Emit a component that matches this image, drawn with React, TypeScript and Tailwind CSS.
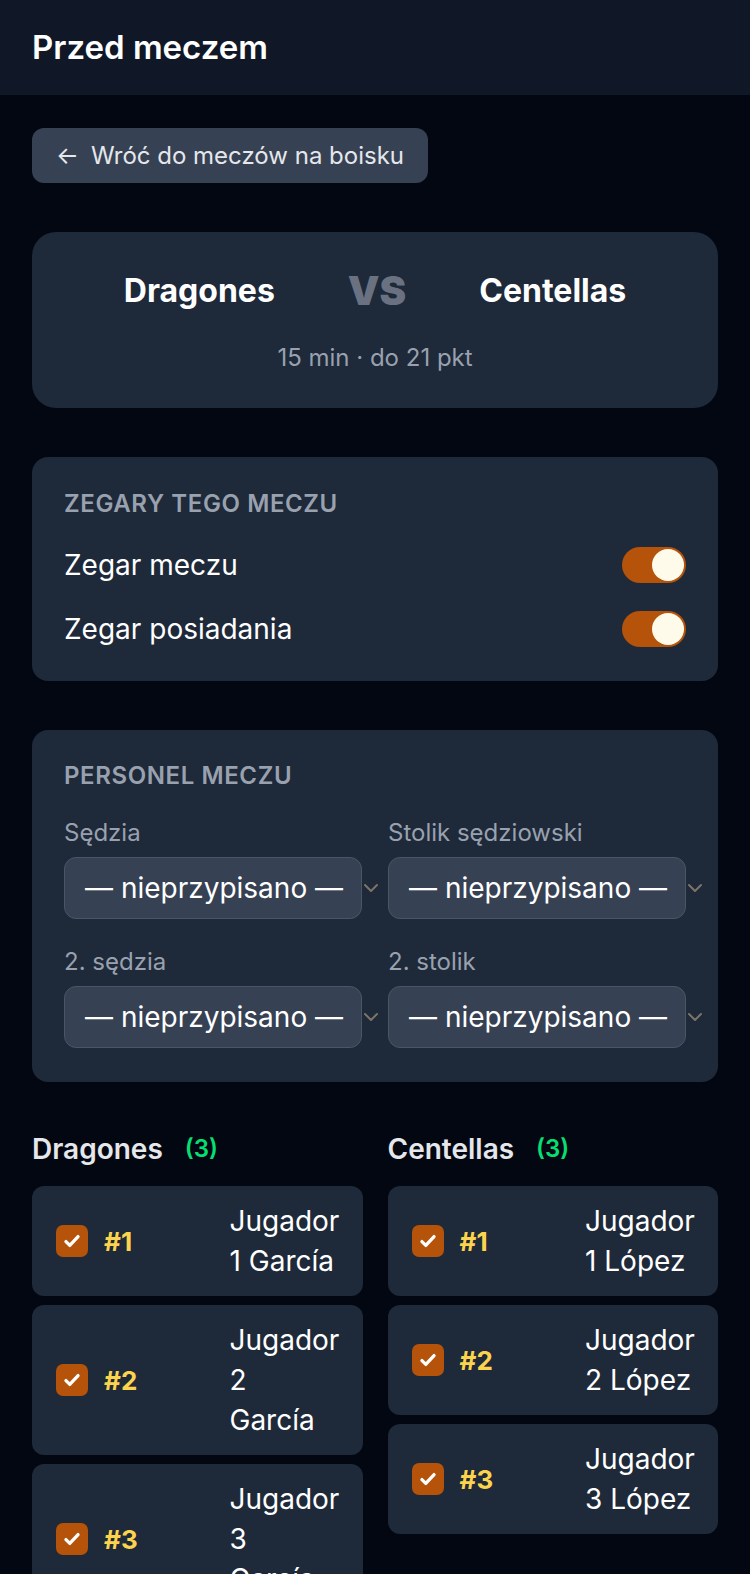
import { ChevronDown } from "lucide-react";

const font = { fontFamily: "Inter, 'Noto Sans', sans-serif" };

function Toggle() {
  return (
    <div className="flex h-[36px] w-[64px] items-center justify-end rounded-full bg-[#b45309] p-[2px]">
      <div className="h-[32px] w-[32px] rounded-full bg-[#fffbeb]" />
    </div>
  );
}

function Check() {
  return (
    <div className="flex h-[32px] w-[32px] shrink-0 items-center justify-center rounded-[7px] bg-[#b45309]">
      <svg viewBox="0 0 20 20" className="h-[22px] w-[22px]" fill="none" stroke="#fff" strokeWidth="3" strokeLinecap="round" strokeLinejoin="round">
        <path d="M4.5 10.5l3.5 3.5L15.5 6" />
      </svg>
    </div>
  );
}

function Picker({ label }: { label: string }) {
  return (
    <div>
      <div className="mb-[8px] text-[24px] leading-[32px] text-gray-400">{label}</div>
      <div className="relative">
        <div className="flex h-[62px] items-center whitespace-nowrap rounded-xl border border-gray-600 bg-gray-700 px-[20px] text-[28px] text-white">
          — nieprzypisano —
        </div>
        <ChevronDown className="absolute right-[-21px] top-[19px] h-[24px] w-[24px] text-[#7c7468]" strokeWidth={2} />
      </div>
    </div>
  );
}

function Player({ num, lines }: { num: number; lines: string[] }) {
  return (
    <div className="flex items-center rounded-xl bg-gray-800 py-[15px] pl-[24px] pr-[20px]">
      <Check />
      <span className="ml-[16px] text-[26px] font-bold text-[#fcd34d]">#{num}</span>
      <span className="ml-auto w-[113px] text-[28px] leading-[40px] text-white">
        {lines.map((l, i) => (
          <span key={i} className="block whitespace-nowrap">
            {l}
          </span>
        ))}
      </span>
    </div>
  );
}

function Team({ name, players }: { name: string; players: string[][] }) {
  return (
    <div>
      <div className="mb-[19px] flex h-[36px] items-center gap-[22px]">
        <span className="text-[28px] font-semibold text-gray-200">{name}</span>
        <span className="text-[24px] font-semibold text-green-400">({players.length})</span>
      </div>
      <div className="flex flex-col gap-[9px]">
        {players.map((p, i) => (
          <Player key={i} num={i + 1} lines={p} />
        ))}
      </div>
    </div>
  );
}

export default function App() {
  return (
    <div style={font} className="min-h-screen bg-gray-950">
      <header className="flex h-[95px] items-center bg-gray-900 px-[32px]">
        <h1 className="text-[33px] font-semibold text-white">Przed meczem</h1>
      </header>
      <main className="flex flex-col gap-[49px] px-[32px] pt-[33px]">
        <div>
          <button className="flex h-[55px] items-center gap-[12px] rounded-xl bg-gray-700 px-[24px] text-[24px] text-gray-200">
            <span>←</span>
            <span>Wróć do meczów na boisku</span>
          </button>
        </div>

        <section className="rounded-3xl bg-gray-800 pb-[34px] pt-[37px]">
          <div className="flex h-[44px] items-center justify-center gap-[73px]">
            <span className="text-[32px] font-bold text-white">Dragones</span>
            <span className="text-[40px] font-black text-gray-500">VS</span>
            <span className="text-[32px] font-bold text-white">Centellas</span>
          </div>
          <div className="mt-[29px] text-center text-[24px] leading-[32px] text-gray-400">15 min · do 21 pkt</div>
        </section>

        <section className="rounded-2xl bg-gray-800 px-[32px] pb-[34px] pt-[33px]">
          <h2 className="text-[24px] font-semibold uppercase leading-[28px] tracking-wide text-gray-400">Zegary tego meczu</h2>
          <div className="mt-[29px] flex flex-col gap-[28px]">
            <div className="flex h-[36px] items-center justify-between">
              <span className="text-[28px] text-white">Zegar meczu</span>
              <Toggle />
            </div>
            <div className="flex h-[36px] items-center justify-between">
              <span className="text-[28px] text-white">Zegar posiadania</span>
              <Toggle />
            </div>
          </div>
        </section>

        <section className="rounded-2xl bg-gray-800 px-[32px] pb-[34px] pt-[32px]">
          <h2 className="text-[24px] font-semibold uppercase leading-[28px] tracking-wide text-gray-400">Personel meczu</h2>
          <div className="mt-[27px] grid grid-cols-2 gap-x-[26px] gap-y-[27px]">
            <Picker label="Sędzia" />
            <Picker label="Stolik sędziowski" />
            <Picker label="2. sędzia" />
            <Picker label="2. stolik" />
          </div>
        </section>

        <section className="grid grid-cols-2 gap-[25px] pb-[40px]">
          <Team
            name="Dragones"
            players={[
              ["Jugador", "1 García"],
              ["Jugador", "2", "García"],
              ["Jugador", "3", "García"],
            ]}
          />
          <Team
            name="Centellas"
            players={[
              ["Jugador", "1 López"],
              ["Jugador", "2 López"],
              ["Jugador", "3 López"],
            ]}
          />
        </section>
      </main>
    </div>
  );
}
